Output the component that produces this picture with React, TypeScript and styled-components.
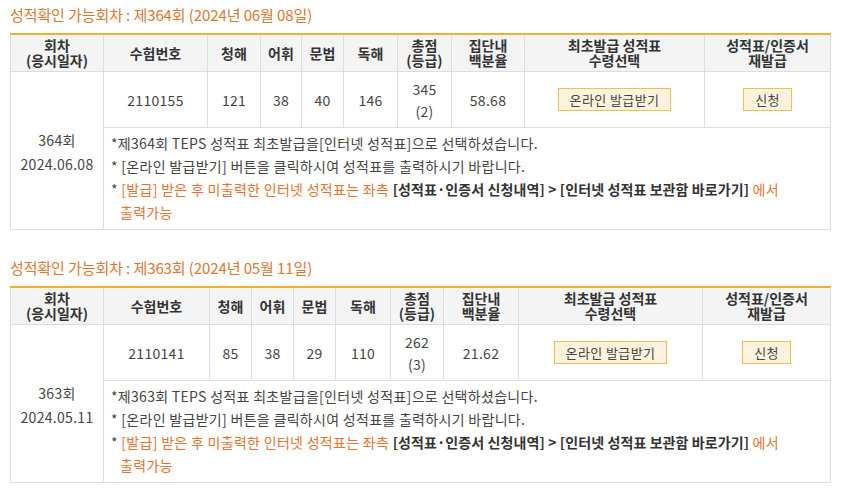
import * as React from "react";
import styled, { createGlobalStyle } from "styled-components";

const GlobalStyle = createGlobalStyle`
    body {
        margin: 0;
        background: #ffffff;
        font-family: "Noto Sans CJK KR", "Noto Sans", sans-serif;
        color: #444444;
    }
`;

const Page = styled.div`
    width: 820px;
    padding: 5px 0 0 10px;
`;

const Section = styled.section`
    & + & {
        margin-top: 28px;
    }
`;

const Title = styled.h3`
    margin: 0 0 8px;
    font-size: 15px;
    line-height: 20px;
    font-weight: 400;
    color: #d9782f;
    letter-spacing: -0.1px;
`;

const Table = styled.table`
    width: 820px;
    table-layout: fixed;
    border-collapse: collapse;
    border-top: 2px solid #f0b22e;
    font-size: 14px;
`;

const Col = styled.col<{ $w: number }>`
    width: ${p => p.$w}px;
`;

const Th = styled.th`
    height: 36px;
    padding: 0;
    background: #f4f4f5;
    border: 1px solid #dddddd;
    border-top: none;
    font-weight: 700;
    color: #333333;
    line-height: 15px;
    text-align: center;
    vertical-align: middle;
`;

const Td = styled.td`
    height: 55px;
    padding: 0;
    border: 1px solid #dddddd;
    color: #444444;
    line-height: 22px;
    letter-spacing: 0.3px;
    text-align: center;
    vertical-align: middle;
`;

const SessionCell = styled.td`
    padding: 56px 0 0;
    border: 1px solid #dddddd;
    color: #444444;
    line-height: 24px;
    letter-spacing: 0.3px;
    text-align: center;
    vertical-align: top;
`;

const NotesCell = styled.td`
    padding: 4px 8px 5px 7px;
    border: 1px solid #dddddd;
    text-align: left;
    vertical-align: top;
    line-height: 23px;
    color: #444444;
    letter-spacing: 0.3px;
`;

const Note = styled.div`
    padding-left: 9px;
    text-indent: -9px;
    white-space: nowrap;
`;

const Orange = styled.span`
    color: #e2742f;
`;

const Strong = styled.b`
    font-weight: 700;
    color: #333333;
    letter-spacing: 0.1px;
`;

const IssueButton = styled.button<{ $pad: number }>`
    height: 23px;
    padding: 0 ${p => p.$pad}px;
    background: #fdf3dc;
    border: 1px solid #e8c15a;
    font-family: inherit;
    font-size: 13px;
    letter-spacing: 0.4px;
    color: #444444;
    line-height: 21px;
    cursor: pointer;
`;

type Sitting = {
    no: number;
    dateLong: string;
    date: string;
    examNo: string;
    listening: number;
    vocab: number;
    grammar: number;
    reading: number;
    total: number;
    grade: number;
    percentile: string;
    widths: number[];
};

const sittings: Sitting[] = [
    {
        no: 364, dateLong: "2024년 06월 08일", date: "2024.06.08", examNo: "2110155",
        listening: 121, vocab: 38, grammar: 40, reading: 146, total: 345, grade: 2, percentile: "58.68",
        widths: [93, 104, 53, 41, 42, 54, 54, 73, 180, 126],
    },
    {
        no: 363, dateLong: "2024년 05월 11일", date: "2024.05.11", examNo: "2110141",
        listening: 85, vocab: 38, grammar: 29, reading: 110, total: 262, grade: 3, percentile: "21.62",
        widths: [93, 106, 42, 42, 42, 55, 53, 75, 184, 128],
    },
];

const ScoreTable = ({ s }: { s: Sitting }) => (
    <Section>
        <Title>성적확인 가능회차 : 제{s.no}회 ({s.dateLong})</Title>
        <Table>
            <colgroup>
                {s.widths.map((w, i) => <Col key={i} $w={w}/>)}
            </colgroup>
            <thead>
                <tr>
                    <Th>회차<br/>(응시일자)</Th>
                    <Th>수험번호</Th>
                    <Th>청해</Th>
                    <Th>어휘</Th>
                    <Th>문법</Th>
                    <Th>독해</Th>
                    <Th>총점<br/>(등급)</Th>
                    <Th>집단내<br/>백분율</Th>
                    <Th>최초발급 성적표<br/>수령선택</Th>
                    <Th>성적표/인증서<br/>재발급</Th>
                </tr>
            </thead>
            <tbody>
                <tr>
                    <SessionCell rowSpan={2}>{s.no}회<br/>{s.date}</SessionCell>
                    <Td>{s.examNo}</Td>
                    <Td>{s.listening}</Td>
                    <Td>{s.vocab}</Td>
                    <Td>{s.grammar}</Td>
                    <Td>{s.reading}</Td>
                    <Td>{s.total}<br/>({s.grade})</Td>
                    <Td>{s.percentile}</Td>
                    <Td><IssueButton type="button" $pad={11}>온라인 발급받기</IssueButton></Td>
                    <Td><IssueButton type="button" $pad={11}>신청</IssueButton></Td>
                </tr>
                <tr>
                    <NotesCell colSpan={9}>
                        <Note>*제{s.no}회 TEPS 성적표 최초발급을[인터넷 성적표]으로 선택하셨습니다.</Note>
                        <Note>* [온라인 발급받기] 버튼을 클릭하시여 성적표를 출력하시기 바랍니다.</Note>
                        <Note>
                            * <Orange>[발급] 받은 후 미출력한 인터넷 성적표는 좌측 </Orange>
                            <Strong>[성적표·인증서 신청내역] &gt; [인터넷 성적표 보관함 바로가기]</Strong>
                            <Orange> 에서</Orange>
                            <br/>
                            <Orange>출력가능</Orange>
                        </Note>
                    </NotesCell>
                </tr>
            </tbody>
        </Table>
    </Section>
);

const App = () => (
    <Page>
        <GlobalStyle/>
        {sittings.map(s => <ScoreTable key={s.no} s={s}/>)}
    </Page>
);

export default App;
